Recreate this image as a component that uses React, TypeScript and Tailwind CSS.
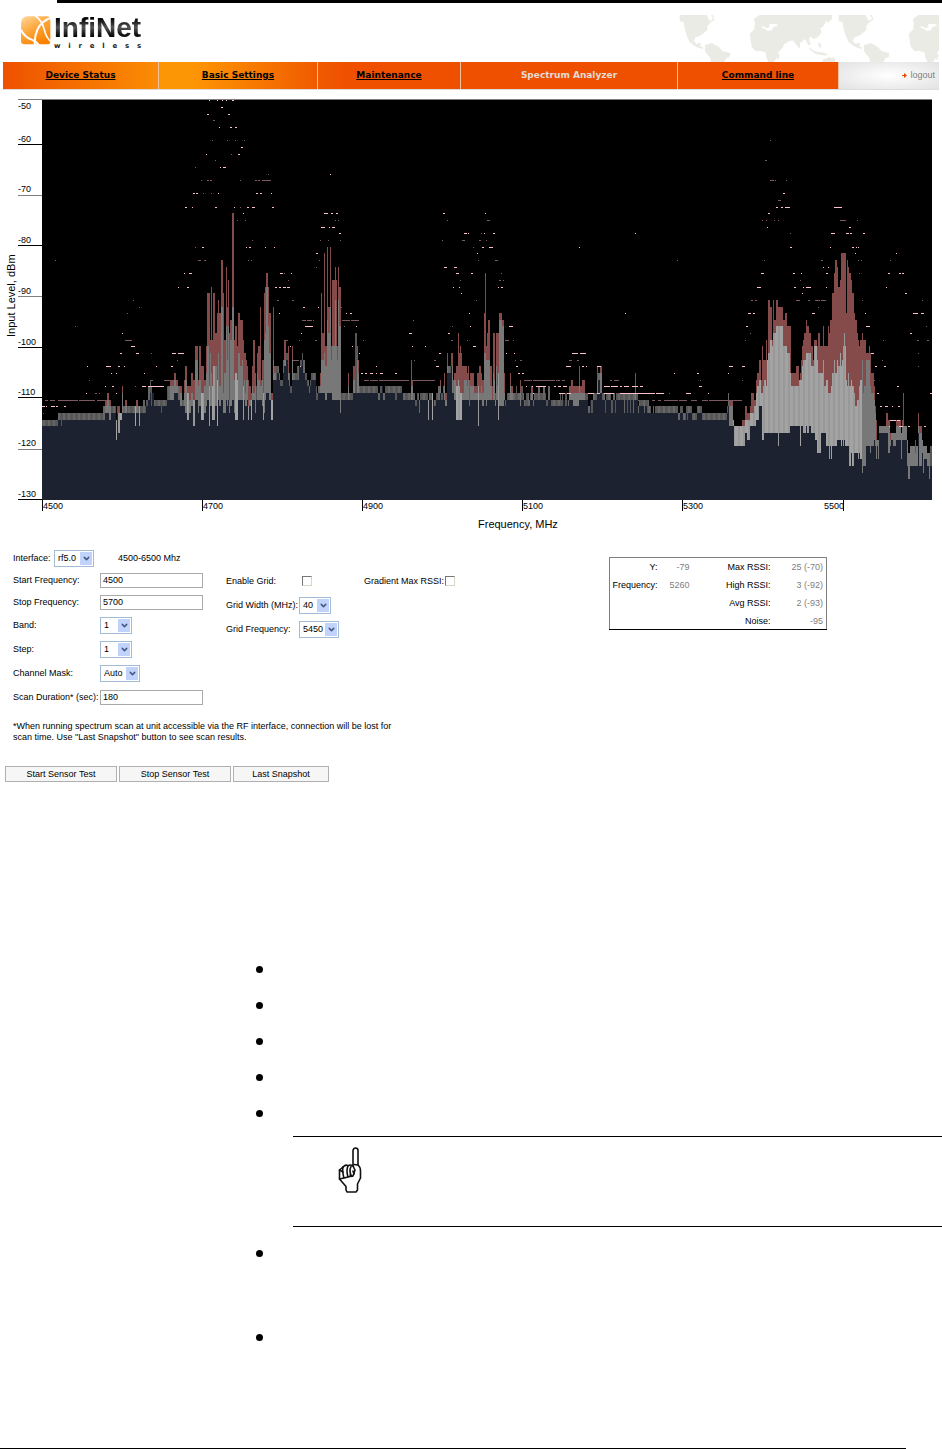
import { ChevronDown } from "lucide-react";
import type { ReactNode } from "react";

// One entry per change: x:noise/average/high, in levels of about 1 dB.
// "high" is left out where it does not rise above the average.
const SWEEP = `
42:32/31 58:31/30 61:32/30 62:31/30 103:31/29 105:30/29/28 107:30/28/27 109:31/29/28 111:30/29 116:34/31 117:30/29
118:33/30/29 120:31/30 122:30/27/26 123:30/29 125:30/29/28 127:30/29 135:32/29 136:30/29/28 138:30/29 139:32/29 140:30/29
141:30/29 143:30/28 145:30/29 146:29/28 148:28/26 150:27/25 151:29/26 152:27/27 154:29/28 161:30/28 162:29/28 167:28/26
170:28/26/25 174:27/25/24 176:27/26/25 178:28/26 180:29/27/26 182:29/28 184:29/27/25 185:30/25/23 187:31/27/26
189:30/28/26 191:29/27/24 193:32/28/25 195:28/22/20 198:30/26/25 199:29/25/20 201:31/27/23 204:30/26/25 206:29/24/20
207:28/20/12 209:32/26/12 210:29/21/19 211:29/24/11 212:31/26/19 213:31/23/12 215:29/23/18 217:32/25/15 218:28/21/13
219:29/26/15 221:28/14/7 223:30/27/12 224:30/24/19 226:28/17/8 227:29/22/14 228:28/17/10 229:30/28/18 230:29/19/16
232:28/14/0 234:30/25/19 235:31/24/17 237:31/25/20 238:28/21/15 240:28/23/16 242:28/22/16 243:31/26/19 244:28/25/21
245:29/27/21 246:29/25/22 247:28/25/23 248:31/29/25 249:29/28/26 251:31/28/27 252:28/26/23 253:28/27/19 255:30/26/24
256:28/26 257:28/24/21 258:28/25/20 260:28/26/14 261:28/26/25 262:29/25/22 263:31/27/22 264:30/19/12 265:28/18/11
266:27/11/9 268:27/17/11 269:28/21/15 271:31/28/27 273:25/22/14 274:25/24/23 276:25/23 277:24/23 279:25/24 280:26/25
283:24/22 284:23/22/19 286:22/21 288:25/24/20 289:26/24 290:27/26 292:25/22/20 293:25/24 297:25/23 299:23/23
300:23/22 302:22/21 303:24/22 305:25/24 307:26/25 309:27/26 310:26/25 311:25/24 316:28/26 317:28/27 318:27/26
320:27/26/24 321:27/22/12 322:27/22/18 324:27/21/6 325:28/23/20 327:27/16/5 328:27/18/14 330:27/14/5 331:27/22/20
332:28/20/10 334:28/20/10 335:28/13/8 336:28/20/10 337:28/22/20 338:28/13/8 339:28/17/11 340:30/17/11 341:28/27
348:28/26/24 349:28/27 353:27/25/23 355:27/18 357:27/22/20 358:27/24/22 359:27/26 378:28/27 380:27/26 382:26/26
383:28/27 385:27/26 395:28/26 397:27/26 402:27/27 403:28/27 411:28/26/22 412:28/26/25 413:28/27 415:29/28 417:28/27
419:30/28 420:28/27 428:31/28 429:28/27 432:31/27 433:28/28
434:29/28 436:28/27 438:28/26 440:27/26/25 441:28/27 443:27/26 444:28/26/24 445:29/28/27 447:24/23/21 448:24/23
451:23/21 452:27/23/21 453:27/25 454:28/25/24 456:31/26/23 458:31/25/18 459:31/26/21 460:31/27/20 461:31/27/21
462:28/27/23 464:28/25/23 467:28/26/24 468:28/25/23 469:29/25/25 470:28/26/24 474:28/27/26 477:28/27/24 478:32/26/24
479:28/27/23 481:28/26/24 482:29/27/25 484:28/21/15 485:28/21/9 486:29/22/20 487:28/22/18 488:28/22/16 490:28/26/23
492:28/28/26 493:28/24/18 494:28/25/18 495:29/28/27 496:28/23/18 497:28/26/18 498:31/24/18 499:29/16/15 502:29/17/16
504:28/27/24 505:29/28 506:28/28 507:28/27 510:28/26/24 511:28/27/26 513:28/27 516:28/26 517:28/27 520:29/27/25
521:28/26 523:28/27 524:29/28 526:29/27 529:29/28 530:28/27 531:28/27/26 533:29/28 534:28/27 538:28/26 540:28/27
543:28/26 545:28/27 546:29/28 548:28/26 550:28/28 551:29/28 560:29/27 561:29/28 562:29/27 563:28/28 565:29/27
567:28/28 568:29/28 569:28/27/26 571:28/27/25 573:29/27/26 579:28/26/23 580:28/27/26 582:28/27/25 585:28/27 588:30/29
590:28/28 591:30/28 593:28/27 597:27/25/23 598:25/24 600:27/24/23 602:28/27 605:30/28 606:28/27 611:30/28 613:28/27
615:30/28 616:28/27 624:30/27 625:28/27 627:30/27 628:28/27 630:30/27 631:28/27 633:30/27 634:28/27 635:28/27/24
636:28/27 638:30/29 639:29/28 644:30/28 645:29/28 647:30/28 649:30/29 651:30/30 653:30/29 654:30/30 655:30/29 678:31/30
680:30/29 683:31/30 686:30/29 687:31/29 688:30/29 692:31/30 697:30/29 702:31/30 727:30/29 728:29/27 729:32/29/28
731:32/29/28 733:32/31 734:35/32 742:35/32/31 745:33/31/29 747:34/31/30 750:32/30/29 751:32/30/27 754:32/29/28
756:31/27/25 757:31/26/24 759:29/25/22 761:29/27/25 762:34/27/20 763:34/26/22 764:33/25/22 766:33/26/19 767:33/22/22
768:33/21/13 770:33/19/14 772:33/20/19 773:33/18/13 774:33/18/16 776:33/17/13 778:35/17/14 779:33/17/14 783:33/20/16
785:33/20/15 787:33/21/17 790:32/24/17 791:32/26/24 795:32/26/24 796:32/26/23 799:32/25/25 800:35/25/24 801:32/25/22
802:32/23/20 803:33/22/19 804:33/22/18 806:32/21/16 807:33/21/17 809:32/21/18 811:33/23/20 813:33/23/22 814:33/20/19
815:34/20/19 817:36/22/20 818:36/24/18 820:36/24/20 821:33/24/20 823:33/22/17 824:33/26/20 826:35/25/20 828:35/27/17
829:37/27/18 830:35/27/16 831:37/26/16 832:35/24/12 834:35/22/9 835:35/24/7 837:34/22/8 838:34/23/11 840:34/21/10
841:35/23/6 842:34/22/6 843:35/20/6 844:34/18/6 845:35/20/6 846:35/25/15 847:35/26/7 848:35/24/8 849:38/26/9
851:36/25/10 852:38/26/12 854:36/27/15 855:36/29/16 857:36/28/18 858:37/28/19 859:36/26/20 860:37/25/19 862:39/22/18
863:38/27/19 864:38/26/19 865:38/26/19 866:35/22/21 869:35/22/20 870:36/26/21 871:35/27/24 874:34/28/26 875:35/30/29
876:37/34/31 877:35/34 878:37/34 879:33/32 886:33/32/30 888:36/32/31 890:35/34/33 891:34/33 893:35/33 896:34/32/31
899:34/32/31 901:37/33 902:34/32/31 903:34/32/27 904:34/32 907:38/34 908:40/36 910:38/35 915:38/36/34 916:38/35
918:33/32/30 919:38/33/32 922:36/34 923:39/35 924:37/35 927:38/36 929:40/36 930:38/35 932:38/35`;

// Peak marks, one row per level: x+width, a leading ~ for a dim mark.
const PEAKS = `
-17|209+1 217+1 222+1 226+1 232+2
-16|221+2
-15|207+2 228+2
-14|~213+2
-13|219+1 230+2 235+2
-11|~212+1 ~227+1 ~235+1 ~244+1 ~770+1
-10|241+2
-9|206+1 238+2 ~231+1
-8|~215+1 ~765+2
-7|220+1 223+3 ~195+1
-6|~268+1 330+1
-5|~201+1 ~207+2 ~210+2 ~240+1 ~255+2 ~258+2 ~262+9 ~770+4 ~775+1 ~786+1
-3|193+2 196+2 218+1 256+2 260+2 271+1 ~203+1 ~211+1 783+2
-2|~778+3
-1|185+2 192+1 215+2 234+1 ~240+1 247+2 252+3 272+2 776+2 781+2 785+5 834+8
0|243+1 324+4 331+2 336+2 443+2 485+1 768+2
1|~237+1 ~245+1 ~335+1 ~338+1 ~447+1 ~487+3 ~762+1 ~766+1 ~774+1 ~778+1 ~840+6 ~857+1
2|321+4 329+1 332+3 767+1 849+2
3|339+2 464+3 468+1 484+1 493+2 ~481+1 635+1 831+4 846+3 850+2 863+2 ~790+1
4|~252+1 ~320+1 ~328+1 ~340+1 ~442+1 ~462+3 ~479+2 ~486+1
5|~195+1 202+2 246+1 249+2 265+1 274+1 482+2 489+4 579+1 ~473+1 790+2 830+1 852+2 856+1 858+1
6|316+2 477+1 855+1 896+1
7|~55+1 ~198+3 ~204+2 ~248+1 ~251+1 ~319+1 ~478+1 ~495+3 ~677+1 ~764+1 ~821+2 ~858+1 ~861+1 ~890+1
8|~316+1 444+3 454+3 823+1 828+1
9|184+1 189+3 280+3 ~284+1 291+1 456+3 471+2 ~501+1 761+3 793+2 801+1 826+2 ~859+1 888+2 899+2 902+2
10|~288+1 ~460+1 ~499+2 ~503+1 ~800+1
11|178+1 187+2 275+2 279+2 283+3 287+3 453+1 459+1 498+1 501+2 757+4 794+2 803+1 806+5 826+1 886+1
12|461+1 802+1 905+2
13|~133+1 ~277+2 ~292+2 ~476+1 ~751+2 ~755+2 ~796+4 ~808+2 ~815+5 ~821+5 ~862+1 ~922+1
14|~139+1 303+2 318+1 ~341+1 ~818+1
15|~127+1 279+1 346+1 350+2 469+1 625+1 748+3 753+2 812+3 865+1 913+5 921+3
16|~302+4 ~307+5 ~313+1 ~342+8 ~351+8 ~413+1
17|~75+1 305+7 312+1 ~344+1 356+1 470+1 509+4 ~452+1 746+2 866+4 ~926+1
18|122+1 301+1 409+3 448+2 ~750+1 910+2
19|~125+7 ~286+2 ~299+1 ~315+2 ~363+1 ~451+2 ~467+1 ~505+4 ~513+1 ~745+1 ~883+1 ~917+2 ~927+2
20|131+4 290+1 352+1 412+1 425+1 473+3
21|120+2 136+3 ~151+1 172+4 178+6 359+1 439+2 506+1 514+1 572+6 580+6 871+3 ~918+1
22|~177+1 ~293+6 ~414+1 ~434+2 ~515+1 ~520+2 ~569+3 ~577+2 ~882+1
23|87+1 106+5 118+2 124+1 156+1 171+2 300+1 376+1 436+3 516+2 566+5 582+2 586+1 597+4 729+4 742+3 875+2 884+2 ~918+1
24|111+1 116+1 144+1 361+2 365+2 370+3 376+1 380+3 395+2 518+2 522+2 674+1 697+2 728+1
25|~89+1 ~151+2 ~164+6 ~172+2 ~364+5 ~370+8 ~379+30 ~411+24 ~524+8 ~533+22 ~556+4 ~562+3 ~610+2 ~614+5 ~700+1 ~742+1 ~874+1
26|105+1 112+2 ~135+1 142+4 148+16 526+1 532+1 536+10 554+2 558+3 563+4 604+6 611+7 620+2 624+5 632+6 640+3 699+3 897+2
27|86+1 ~95+2 ~99+1 116+1 533+1 559+6 567+4 588+6 597+3 604+10 620+35 656+8 ~669+1 686+5 708+1 877+2 930+2
28|~45+3 ~50+5 ~58+20 ~79+16 ~97+8 ~638+1 ~652+3 ~658+3 ~664+14 ~679+8 ~691+6 ~702+6 ~709+33
29|42+3 46+1 51+4 56+2 64+2 880+2 885+3 892+1 898+2
30|~43+1
31|890+6 897+3
32|889+1 899+4 908+2 924+2`;

const levelY = (level: number) => Math.round(213.4 + level * 6.65);

type Paths = { noise: string; high: string; shades: string[] };

function buildSweep(): Paths {
	const steps = SWEEP.trim()
		.split(/\s+/)
		.map((s) => {
			const [x, levels] = s.split(":");
			const [noise, avg, high] = levels.split("/").map(Number);
			return { x: Number(x), noise, avg, high: high ?? avg };
		});
	const out: Paths = { noise: "", high: "", shades: ["", "", "", "", ""] };
	const bar = (x: number, w: number, top: number, bottom: number) =>
		`M${x} ${top}h${w}V${bottom}H${x}z`;
	for (let i = 0; i < steps.length - 1; i++) {
		const { x, noise, avg, high } = steps[i];
		const w = steps[i + 1].x - x;
		out.noise += bar(x, w, levelY(noise), 500);
		if (high < avg) out.high += bar(x, w, levelY(high), levelY(avg));
		const busy = (x > 732 && x < 862) || (x > 115 && x < 600 && noise >= 31);
		const medium = high < avg || (x > 862 && x < 930);
		for (let c = x; c < x + w; c++) {
			const band = c % 5 < 3 ? 0 : 1;
			const tone = busy ? 3 + band : medium ? 2 : band;
			out.shades[tone] += bar(c, 1, levelY(avg), levelY(noise));
		}
	}
	return out;
}

function buildPeaks() {
	let bright = "";
	let dim = "";
	for (const row of PEAKS.trim().split("\n")) {
		const [level, marks] = row.split("|");
		for (const mark of marks.split(" ")) {
			const [x, w] = mark.replace("~", "").split("+");
			const d = `M${x} ${levelY(Number(level))}h${w}v1h-${w}z`;
			if (mark.startsWith("~")) dim += d;
			else bright += d;
		}
	}
	return { bright, dim };
}

const sweep = buildSweep();
const peaks = buildPeaks();
const SHADES = ["#565656", "#666666", "#787878", "#a3a3a3", "#989898"];

const LEVEL_TICKS = [
	{ label: "-50", y: 99, text: 109, color: "#808080" },
	{ label: "-60", y: 144, text: 142, color: "#000" },
	{ label: "-70", y: 195, text: 192, color: "#808080" },
	{ label: "-80", y: 245, text: 243, color: "#000" },
	{ label: "-90", y: 296, text: 294, color: "#808080" },
	{ label: "-100", y: 347, text: 345, color: "#000" },
	{ label: "-110", y: 397, text: 395, color: "#000" },
	{ label: "-120", y: 449, text: 446, color: "#808080" },
	{ label: "-130", y: 499, text: 497, color: "#000" },
];

const FREQ_TICKS = [
	{ label: "4500", x: 42, text: 43 },
	{ label: "4700", x: 202, text: 203 },
	{ label: "4900", x: 362, text: 363 },
	{ label: "5100", x: 522, text: 523 },
	{ label: "5300", x: 682, text: 683 },
	{ label: "5500", x: 843, text: 824 },
];

function SpectrumChart() {
	return (
		<svg
			viewBox="0 90 942 446"
			className="block w-full font-['Liberation_Sans',sans-serif]"
			role="img"
			aria-label="Spectrum"
		>
			<g shapeRendering="crispEdges">
				<rect x="42" y="99" width="890" height="401" fill="#000" />
				<path d={sweep.noise} fill="#1c222f" />
				<path d={sweep.high} fill="#854a4a" />
				{SHADES.map((fill, i) => (
					<path key={fill} d={sweep.shades[i]} fill={fill} />
				))}
				<rect x="18" y="99" width="914" height="1" fill="#808080" />
				<path d={peaks.dim} fill="#7d5a60" />
				<path d={peaks.bright} fill="#ffc0cb" />
				{LEVEL_TICKS.map((t) => (
					<rect key={t.label} x="18" y={t.y} width="24" height="1" fill={t.color} />
				))}
				{FREQ_TICKS.map((t) => (
					<rect key={t.label} x={t.x} y="500" width="1" height="11" />
				))}
			</g>
			<g fontSize="9">
				{LEVEL_TICKS.map((t) => (
					<text key={t.label} x="18" y={t.text}>
						{t.label}
					</text>
				))}
				{FREQ_TICKS.map((t) => (
					<text key={t.label} x={t.text} y="509">
						{t.label}
					</text>
				))}
			</g>
			<g fontSize="11">
				<text x="478" y="528">
					Frequency, MHz
				</text>
				<text transform="translate(15 337) rotate(-90)">Input Level, dBm</text>
			</g>
		</svg>
	);
}

function Logo() {
	return (
		<div className="flex items-start gap-[3px] pt-3 pl-[18px]">
			<svg viewBox="0 0 90 90" className="size-[30px]" aria-hidden="true">
				<defs>
					<linearGradient id="mark" x1="0" y1="0" x2="0.6" y2="1">
						<stop offset="0" stopColor="#ffd9a0" />
						<stop offset="0.45" stopColor="#fdac45" />
						<stop offset="1" stopColor="#fb8200" />
					</linearGradient>
				</defs>
				<path
					d="M18 4h60q10 0 10 10v66q0 8-10 8H10Q0 88 0 78V24Q2 6 18 4z"
					fill="url(#mark)"
				/>
				<g fill="none" stroke="#fff">
					<path d="M0 44Q10 66 32 74Q48 80 54 92" strokeWidth="6" />
					<path d="M90 8Q62 18 50 42Q38 70 42 92" strokeWidth="6" />
					<path d="M42 2Q62 14 70 44Q76 70 90 80" strokeWidth="5" />
				</g>
			</svg>
			<div className="flex flex-col font-['Liberation_Sans',sans-serif] font-bold">
				<span className="bg-linear-to-b from-black via-[#555] to-black bg-clip-text text-[28px] leading-[25px] text-transparent">
					InfiNet
				</span>
				<span className="flex justify-between pt-0.5 font-['DejaVu_Sans',sans-serif] text-[7px] leading-[8px] text-[#222]">
					{[..."wireless"].map((letter, i) => (
						<span key={i}>{letter}</span>
					))}
				</span>
			</div>
		</div>
	);
}

function WorldMap() {
	return (
		<svg viewBox="0 0 780 141" className="h-[47px] w-[260px]" aria-hidden="true">
			<defs>
				<g id="world" fill="#ebebe5">
					<path d="M2 0h100l4 14-14 10-8 12 2 8-14 12-12 8-10 2-6 12 8 8 14-2-2 10 10 4-4 4-18-6-20-14-8-18L16 38 14 22 2 18z" />
					<path d="M84 0h12l6 10-6 8-8-6z" fill="#fff" />
					<path d="M78 90l20-6 22 12 10 12 24 6-2 12-10 4-6 11H96l-2-12-16-20z" />
					<path d="M212 56l18-16 18-4 18 6 20 6 10 18 10 14h14l-10 18-12 14-2 14-12 15h-16l-6-14-2-14-16-6-14 2-12-14z" />
					<path d="M226 34l2-10-4-10 8-8 10-6h218l-2 14-12 10-4-8-8 18-10 6 4 12-10 14-14 6-10-8-4 12 6 12-8 2-10-18-14 12-2 18-14-18-8-8-14 4-4 6-16-4-10-12-4 12 22 14-14 10-14-14-8-18-22-4-6-8-8 4-6-6-8 10z" />
					<path d="M244 36l10-2 8 6 10-4-2-8 20-2 8 6-14 4-6 10-12 2-8-6z" fill="#fff" />
					<path d="M388 96l14 10 12 4 16 2 16 6-4 4-30-4-18-12zM416 84l6-2 6 14-6 4zM296 118l6-2-2 16-6 2z" />
					<path d="M430 141l2-8 14-4 4-4 8 4 6-4 6 16z" />
				</g>
			</defs>
			<use href="#world" />
			<use href="#world" x="477" />
		</svg>
	);
}

const TABS = [
	{ label: "Device Status", bg: "bg-linear-to-r from-[#ee5000] to-[#fb8c04]" },
	{
		label: "Basic Settings",
		bg: "bg-linear-to-r from-[#fd9604] from-20% to-[#f05a00]",
	},
	{ label: "Maintenance", bg: "bg-linear-to-r from-[#f05a00] to-[#ef5000] to-20%" },
	{ label: "Spectrum Analyzer", bg: "bg-[#ef5000]", current: true },
	{ label: "Command line", bg: "bg-[#ef5000]" },
];

function NavBar() {
	return (
		<nav className="mr-[3px] ml-[3px] grid grid-cols-[155fr_158fr_142fr_216fr_160fr_100fr] gap-px border-b border-[#ddd] bg-[#f3c0a0] font-['DejaVu_Sans',sans-serif] text-[9px] leading-[27px]">
			{TABS.map((tab) => (
				<a
					key={tab.label}
					href="#"
					className={`text-center font-bold ${tab.bg} ${tab.current ? "text-[#e4dcd4]" : "text-black underline"}`}
				>
					{tab.label}
				</a>
			))}
			<a
				href="#"
				className="flex items-center justify-end gap-[3px] bg-radial from-white to-[#e2e2e2] pr-1 font-['Liberation_Sans',sans-serif] text-[9px] text-[#808080]"
			>
				<svg viewBox="0 0 5 5" className="size-[5px]" aria-hidden="true">
					<path d="M0 2h2V0l3 2.5L2 5V3H0z" fill="#e8480c" />
				</svg>
				logout
			</a>
		</nav>
	);
}

function Select({ id, value, width }: { id: string; value: string; width: string }) {
	return (
		<span className={`relative inline-block h-[17px] ${width}`}>
			<select
				id={id}
				defaultValue={value}
				className="block h-full w-full appearance-none border border-[#a3bcd6] bg-white pr-3 pl-[3px] text-[9px] leading-[15px]"
			>
				<option>{value}</option>
			</select>
			<span className="pointer-events-none absolute inset-y-0.5 right-0.5 flex w-3 items-center justify-center bg-[#c2d3fb]">
				<ChevronDown size={9} strokeWidth={4} color="#405a88" />
			</span>
		</span>
	);
}

function TextBox({ id, value }: { id: string; value: string }) {
	return (
		<input
			id={id}
			type="text"
			defaultValue={value}
			className="h-[15px] w-[103px] border border-[#aaa] bg-white px-0.5 text-[9px] leading-[13px]"
		/>
	);
}

function CheckBox({ id }: { id: string }) {
	return (
		<input
			id={id}
			type="checkbox"
			className="size-[10px] appearance-none border border-[#d8d4c8] border-t-[#777] border-l-[#777] bg-white"
		/>
	);
}

function Field({
	id,
	label,
	labelWidth,
	height,
	children,
}: {
	id: string;
	label: string;
	labelWidth: string;
	height: string;
	children: ReactNode;
}) {
	return (
		<div className={`flex items-center ${height}`}>
			<label htmlFor={id} className={`whitespace-nowrap ${labelWidth}`}>
				{label}
			</label>
			{children}
		</div>
	);
}

function ScanForm() {
	const left = "w-[87px]";
	const middle = "w-[73px]";
	return (
		<div className="flex flex-col">
			<div className="flex h-[22px] items-center">
				<label htmlFor="interface" className="w-[41px]">
					Interface:
				</label>
				<Select id="interface" value="rf5.0" width="w-10" />
				<span className="pl-6">4500-6500 Mhz</span>
			</div>
			<div className="flex items-start">
				<div className="flex w-[213px] flex-col">
					<Field id="start" label="Start Frequency:" labelWidth={left} height="h-[22px]">
						<TextBox id="start" value="4500" />
					</Field>
					<Field id="stop" label="Stop Frequency:" labelWidth={left} height="h-[22px]">
						<TextBox id="stop" value="5700" />
					</Field>
					<Field id="band" label="Band:" labelWidth={left} height="h-6">
						<Select id="band" value="1" width="w-8" />
					</Field>
					<Field id="step" label="Step:" labelWidth={left} height="h-6">
						<Select id="step" value="1" width="w-8" />
					</Field>
					<Field id="mask" label="Channel Mask:" labelWidth={left} height="h-6">
						<Select id="mask" value="Auto" width="w-10" />
					</Field>
					<Field
						id="duration"
						label="Scan Duration* (sec):"
						labelWidth={left}
						height="h-6"
					>
						<TextBox id="duration" value="180" />
					</Field>
				</div>
				<div className="flex w-[138px] flex-col">
					<Field id="grid" label="Enable Grid:" labelWidth="w-[76px]" height="h-6">
						<CheckBox id="grid" />
					</Field>
					<Field
						id="gridWidth"
						label="Grid Width (MHz):"
						labelWidth={middle}
						height="h-6"
					>
						<Select id="gridWidth" value="40" width="w-8" />
					</Field>
					<Field
						id="gridFrequency"
						label="Grid Frequency:"
						labelWidth={middle}
						height="h-6"
					>
						<Select id="gridFrequency" value="5450" width="w-10" />
					</Field>
				</div>
				<Field
					id="gradient"
					label="Gradient Max RSSI:"
					labelWidth="w-[81px]"
					height="h-6"
				>
					<CheckBox id="gradient" />
				</Field>
			</div>
		</div>
	);
}

const READOUT = [
	["Y:", "-79", "Max RSSI:", "25 (-70)"],
	["Frequency:", "5260", "High RSSI:", "3 (-92)"],
	["", "", "Avg RSSI:", "2 (-93)"],
	["", "", "Noise:", "-95"],
];

function Readout() {
	return (
		<table className="w-[218px] table-fixed border border-[#808080] border-b-black text-right">
			<tbody>
				{READOUT.map((row) => (
					<tr key={row[2]} className="h-[18px]">
						<th scope="row" className="w-12 p-0 pt-0.5 text-right font-normal">
							{row[0]}
						</th>
						<td className="w-8 p-0 pt-0.5 text-[#808080]">{row[1]}</td>
						<th scope="row" className="p-0 pt-0.5 text-right font-normal">
							{row[2]}
						</th>
						<td className="w-14 p-0 pt-0.5 pr-[3px] text-[#808080]">{row[3]}</td>
					</tr>
				))}
			</tbody>
		</table>
	);
}

function ActionButton({ label, width }: { label: string; width: string }) {
	return (
		<button
			type="button"
			className={`h-4 border border-[#b0b0b0] bg-[#f6f6f6] leading-[14px] ${width}`}
		>
			{label}
		</button>
	);
}

function PointingHand() {
	return (
		<svg
			viewBox="0 0 24 46"
			className="h-[46px] w-6"
			fill="none"
			stroke="#111"
			strokeWidth="1.6"
			strokeLinejoin="round"
			strokeLinecap="round"
			aria-hidden="true"
		>
			<path d="M15 19V3.500Q15.500 1 17.500 1Q20 1 20 3.500V18Q22.500 20 22.500 24V31L19.500 37V43L18 45H9L8 43V39.500L1.500 32V23L5 20" />
			<path d="M5 20Q8 17 10 19Q12 17 15 19L17 23L15 29Q13 30 12 28" />
			<path d="M5 20Q4 24 6 31M10 19Q8 23 10 30M13 19.500Q11 24 13 28M16 17.500L20 18M1.500 32L6 31L10 30L14 29" />
			<path d="M1.500 23L5 25M15 24L16 27" />
		</svg>
	);
}

function Bullet() {
	return (
		<li className="flex h-9 items-center">
			<span className="size-[7px] rounded-full bg-black" />
		</li>
	);
}

export default function App() {
	return (
		<div className="bg-white font-['Liberation_Sans',sans-serif] text-[9px] leading-[11px] text-black">
			<div className="ml-[57px] h-[3px] bg-black" />
			<header className="flex h-[59px] items-start justify-between pr-[3px] pl-[3px]">
				<Logo />
				<div className="pt-3">
					<WorldMap />
				</div>
			</header>
			<NavBar />
			<SpectrumChart />

			<main>
				<section className="flex items-start justify-between pt-[11px] pr-[115px] pl-[13px]">
					<ScanForm />
					<div className="pt-[10px]">
						<Readout />
					</div>
				</section>
				<p className="mt-3 ml-[13px]">
					*When running spectrum scan at unit accessible via the RF interface,
					connection will be lost for
					<br />
					scan time. Use "Last Snapshot" button to see scan results.
				</p>
				<div className="mt-[23px] ml-[5px] flex gap-0.5">
					<ActionButton label="Start Sensor Test" width="w-28" />
					<ActionButton label="Stop Sensor Test" width="w-28" />
					<ActionButton label="Last Snapshot" width="w-24" />
				</div>

				<ul className="mt-[169px] ml-64">
					<Bullet />
					<Bullet />
					<Bullet />
					<Bullet />
					<Bullet />
				</ul>
				<aside className="mt-[5px] ml-[293px] flex h-[91px] items-start border-y border-black pt-[10px] pl-[45px]">
					<PointingHand />
				</aside>
				<ul className="mt-2 ml-64 flex flex-col gap-12">
					<Bullet />
					<Bullet />
				</ul>
			</main>
			<footer className="mt-[93px] mr-9 border-b border-black" />
		</div>
	);
}
